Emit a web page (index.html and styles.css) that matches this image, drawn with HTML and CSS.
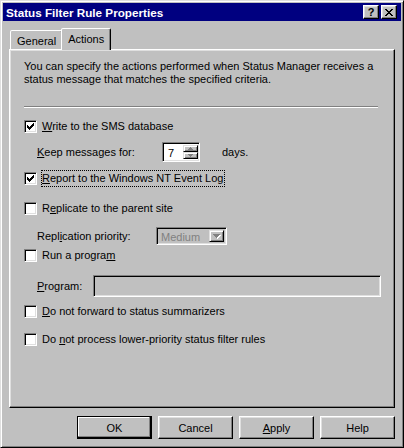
FILE: index.html
```html
<!DOCTYPE html>
<html>
<head>
<meta charset="utf-8">
<title>Status Filter Rule Properties</title>
<link rel="stylesheet" href="styles.css">
</head>
<body>
<div class="window">
  <div class="titlebar">
    <span class="title">Status Filter Rule Properties</span>
    <div class="tbtns">
      <span class="tbtn help">?</span>
      <span class="tbtn"><svg width="8" height="7" viewBox="0 0 8 7"><path d="M0 0h2v1H0zM6 0h2v1H6zM1 1h2v1H1zM5 1h2v1H5zM2 2h4v1H2zM3 3h2v1H3zM2 4h4v1H2zM1 5h2v1H1zM5 5h2v1H5zM0 6h2v1H0zM6 6h2v1H6z"/></svg></span>
    </div>
  </div>

  <div class="tabs">
    <div class="tab">General</div>
    <div class="tab active">Actions</div>
  </div>

  <div class="panel">
    <p class="intro">You can specify the actions performed when Status Manager receives a<br>status message that matches the specified criteria.</p>
    <div class="sep"></div>

    <div class="row cbrow r-write">
      <span class="cb"><svg width="7" height="7" viewBox="0 0 7 7"><path d="M0 2h1v3H0zM1 3h1v3H1zM2 4h1v3H2zM3 3h1v3H3zM4 2h1v3H4zM5 1h1v3H5zM6 0h1v3H6z"/></svg></span>
      <span class="lbl"><u>W</u>rite to the SMS database</span>
    </div>

    <div class="row sub r-keep">
      <span class="sublbl keep-lbl"><u>K</u>eep messages for:</span>
      <div class="spin">
        <span class="spin-val">7</span>
        <div class="spin-btns">
          <span class="spin-btn"><svg width="5" height="3" viewBox="0 0 5 3"><path d="M2 0h1v1H2zM1 1h3v1H1zM0 2h5v1H0z"/></svg></span>
          <span class="spin-btn"><svg width="5" height="3" viewBox="0 0 5 3"><path d="M0 0h5v1H0zM1 1h3v1H1zM2 2h1v1H2z"/></svg></span>
        </div>
      </div>
      <span class="days">days.</span>
    </div>

    <div class="row cbrow r-report">
      <span class="cb"><svg width="7" height="7" viewBox="0 0 7 7"><path d="M0 2h1v3H0zM1 3h1v3H1zM2 4h1v3H2zM3 3h1v3H3zM4 2h1v3H4zM5 1h1v3H5zM6 0h1v3H6z"/></svg></span>
      <span class="lbl focus"><u>R</u>eport to the Windows NT Event Log</span>
    </div>

    <div class="row cbrow r-replicate">
      <span class="cb"></span>
      <span class="lbl">R<u>e</u>plicate to the parent site</span>
    </div>

    <div class="row sub r-priority">
      <span class="sublbl prio-lbl">Repl<u>i</u>cation priority:</span>
      <div class="combo">
        <span class="combo-val">Medium</span>
        <span class="combo-btn"><svg width="8" height="5" viewBox="0 0 8 5"><path fill="#fff" d="M1 1h7v1H1zM2 2h5v1H2zM3 3h3v1H3zM4 4h1v1H4z"/><path fill="#808080" d="M0 0h7v1H0zM1 1h5v1H1zM2 2h3v1H2zM3 3h1v1H3z"/></svg></span>
      </div>
    </div>

    <div class="row cbrow r-run">
      <span class="cb"></span>
      <span class="lbl">Run a progra<u>m</u></span>
    </div>

    <div class="row sub r-program">
      <span class="sublbl prog-lbl"><u>P</u>rogram:</span>
      <div class="field"></div>
    </div>

    <div class="row cbrow r-forward">
      <span class="cb"></span>
      <span class="lbl"><u>D</u>o not forward to status summarizers</span>
    </div>

    <div class="row cbrow r-process">
      <span class="cb"></span>
      <span class="lbl">Do <u>n</u>ot process lower-priority status filter rules</span>
    </div>
  </div>

  <div class="btns">
    <span class="btn default">OK</span>
    <span class="btn">Cancel</span>
    <span class="btn"><u>A</u>pply</span>
    <span class="btn">Help</span>
  </div>
</div>
</body>
</html>
```

FILE: styles.css
```css
* { box-sizing: border-box; }
html, body { margin: 0; padding: 0; }
body {
  background: #c0c0c0;
  font-family: "Liberation Sans", Arial, sans-serif;
  font-size: 11px;
  line-height: 13px;
  color: #000;
}
u { text-decoration: underline; text-underline-offset: 1px; }

.window {
  width: 404px;
  height: 448px;
  background: #c0c0c0;
  border: 1px solid;
  border-color: #dfdfdf #000 #000 #dfdfdf;
  box-shadow: inset 1px 1px #fff, inset -1px -1px #808080;
  padding: 2px;
  display: flex;
  flex-direction: column;
}

/* title bar */
.titlebar {
  height: 18px;
  flex-shrink: 0;
  background: #000080;
  color: #fff;
  display: flex;
  align-items: center;
  justify-content: space-between;
  padding: 0 4px 0 3px;
}
.title { font-weight: bold; font-size: 11.7px; }
.tbtns { display: flex; gap: 2px; }
.tbtn {
  width: 16px;
  height: 14px;
  background: #c0c0c0;
  border: 1px solid;
  border-color: #fff #000 #000 #fff;
  box-shadow: inset -1px -1px #808080, inset 1px 1px #dfdfdf;
  display: flex;
  align-items: center;
  justify-content: center;
  color: #000;
}
.tbtn.help { font-weight: bold; font-size: 11px; line-height: 11px; }

/* tabs */
.tabs {
  display: flex;
  align-items: flex-end;
  height: 21px;
  margin: 7px 0 0 7px;
  flex-shrink: 0;
}
.tab {
  height: 19px;
  padding: 4px 6px 0;
  border: 1px solid;
  border-bottom: none;
  border-color: #fff #000 transparent #fff;
  box-shadow: inset -1px 0 #808080;
  border-radius: 2px 2px 0 0;
  background: #c0c0c0;
}
.tab.active {
  height: 22px;
  margin-bottom: -1px;
  margin-left: -2px;
  padding-top: 4px;
  position: relative;
  z-index: 1;
}

/* panel */
.panel {
  flex-shrink: 0;
  margin-left: 6px;
  width: 386px;
  height: 359px;
  border: 1px solid;
  border-color: #fff #000 #000 #fff;
  box-shadow: inset -1px -1px #808080, inset 1px 1px #dfdfdf;
  padding: 10px 0 0 14px;
  display: flex;
  flex-direction: column;
}
.intro { margin: 0; }
.sep {
  margin-top: 20px;
  width: 354px;
  height: 2px;
  border-top: 1px solid #808080;
  border-bottom: 1px solid #fff;
}

.row { display: flex; align-items: center; }
.cbrow { height: 13px; }
.sub { padding-left: 13px; }

.cb {
  width: 13px;
  height: 13px;
  flex-shrink: 0;
  border: 1px solid;
  border-color: #808080 #fff #fff #808080;
  box-shadow: inset 1px 1px #000, inset -1px -1px #dfdfdf;
  background: #fff;
  padding: 2px;
  display: flex;
}
.cb svg { display: block; }
.lbl { margin-left: 5px; white-space: nowrap; }
.lbl.focus {
  margin-left: 4px;
  border: 1px dotted #000;
  padding: 1px 1px 1px 0;
  line-height: 13px;
}

.r-write { margin-top: 12px; }
.r-keep { margin-top: 9px; height: 20px; }
.r-report { margin-top: 8px; height: 17px; }
.r-replicate { margin-top: 15px; }
.r-priority { margin-top: 12px; height: 18px; }
.r-run { margin-top: 4px; }
.r-program { margin-top: 13px; height: 22px; }
.r-forward { margin-top: 8px; }
.r-process { margin-top: 15px; }

.sublbl { flex-shrink: 0; white-space: nowrap; }
.keep-lbl { width: 125px; }
.prio-lbl { width: 119px; }
.prog-lbl { width: 56px; }

.spin, .combo, .field {
  border: 1px solid;
  border-color: #808080 #fff #fff #808080;
  box-shadow: inset 1px 1px #000, inset -1px -1px #dfdfdf;
}
.spin {
  width: 38px;
  height: 20px;
  background: #fff;
  display: flex;
  padding: 2px 1px 2px 2px;
}
.spin-val { flex: 1; padding-left: 3px; line-height: 16px; }
.spin-btns { width: 15px; display: flex; flex-direction: column; }
.spin-btn {
  height: 8px;
  background: #c0c0c0;
  border: 1px solid;
  border-color: #dfdfdf #000 #000 #dfdfdf;
  box-shadow: inset 1px 1px #fff, inset -1px -1px #808080;
  display: flex;
  align-items: center;
  justify-content: center;
  fill: #808080;
}
.spin-btn svg { display: block; }
.days { margin-left: 22px; }

.combo {
  width: 71px;
  height: 18px;
  background: #c0c0c0;
  display: flex;
  align-items: stretch;
  padding: 2px;
}
.combo-val { flex: 1; color: #808080; padding-left: 2px; line-height: 14px; }
.combo-btn {
  width: 15px;
  background: #c0c0c0;
  border: 1px solid;
  border-color: #dfdfdf #000 #000 #dfdfdf;
  box-shadow: inset 1px 1px #fff, inset -1px -1px #808080;
  display: flex;
  align-items: center;
  justify-content: center;
}
.combo-btn svg { display: block; }

.field {
  width: 288px;
  height: 22px;
  background: #c0c0c0;
}

/* buttons */
.btns {
  display: flex;
  justify-content: flex-end;
  gap: 6px;
  margin: 8px 6px 0 0;
}
.btn {
  width: 75px;
  height: 23px;
  border: 1px solid;
  border-color: #fff #000 #000 #fff;
  box-shadow: inset -1px -1px #808080, inset 1px 1px #dfdfdf;
  display: flex;
  align-items: center;
  justify-content: center;
  padding-top: 1px;
}
.btn.default {
  border-color: #000;
  box-shadow: inset -1px -1px #000, inset -2px -2px #808080, inset 1px 1px #fff;
}
```
